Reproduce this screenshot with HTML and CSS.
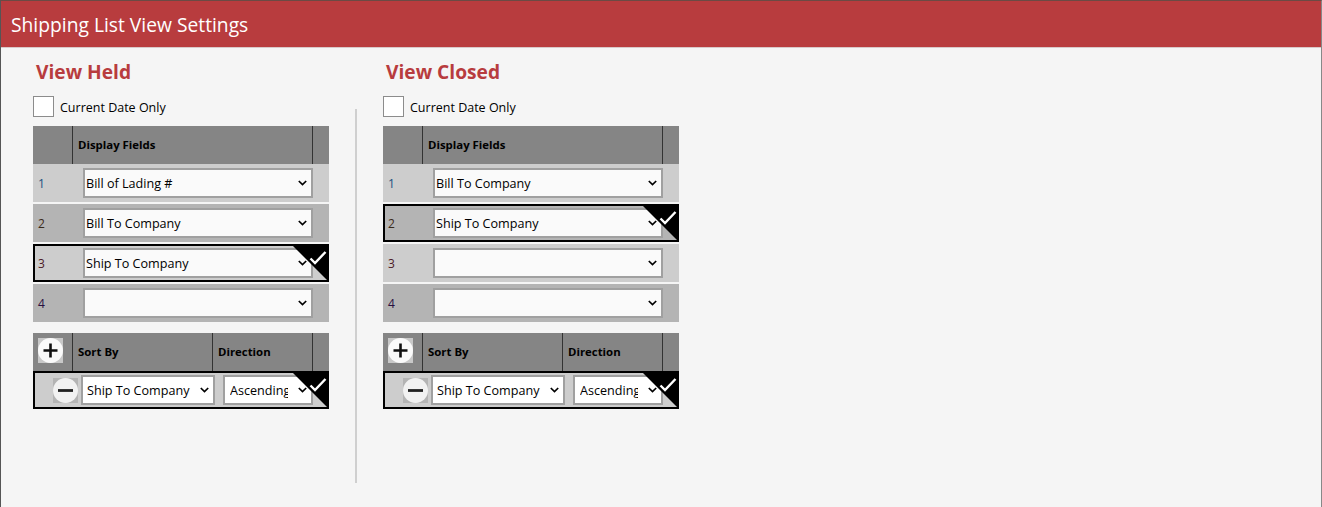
FILE: index.html
```html
<!DOCTYPE html>
<html lang="en">
<head>
<meta charset="utf-8">
<title>Shipping List View Settings</title>
<link rel="stylesheet" href="styles.css">
</head>
<body>
<div class="window">
  <header class="titlebar">Shipping List View Settings</header>
  <main class="content">
    <section class="panel">
      <h2 class="panel-title">View Held</h2>
      <label class="check-line"><input type="checkbox" class="check"><span class="check-text">Current Date Only</span></label>
      <div class="grid-head">
        <div class="hcell hcell-num"></div>
        <div class="hcell hcell-main">Display Fields</div>
        <div class="hcell hcell-end"></div>
      </div>
      <div class="field-rows">
        <div class="row odd"><span class="num n1">1</span><select class="sel"><option>Bill of Lading #</option></select></div>
        <div class="row even"><span class="num n2">2</span><select class="sel"><option>Bill To Company</option></select></div>
        <div class="row odd active"><span class="num n3">3</span><select class="sel"><option>Ship To Company</option></select>
          <svg class="corner" viewBox="0 0 36 36"><path d="M0 0H36V36Z" fill="#000"/><path d="M17.500 12.500L22 17L32.500 6" fill="none" stroke="#fff" stroke-width="2.400"/></svg></div>
        <div class="row even"><span class="num n4">4</span><select class="sel"><option></option></select></div>
      </div>
      <div class="grid-head sort-head">
        <div class="hcell hcell-num"><span class="round-wrap"><svg class="round" viewBox="0 0 25 25"><circle cx="12.500" cy="12.500" r="12.500" fill="#fafafa"/><path d="M5.500 12.500H19.500M12.500 5.500V19.500" stroke="#111" stroke-width="2.600"/></svg></span></div>
        <div class="hcell hcell-sort">Sort By</div>
        <div class="hcell hcell-dir">Direction</div>
        <div class="hcell hcell-end"></div>
      </div>
      <div class="row sort-row active">
        <span class="round-wrap minus"><svg class="round" viewBox="0 0 25 25"><circle cx="12.500" cy="12.500" r="12.500" fill="#f2f2f2"/><path d="M5 12.500H20" stroke="#222" stroke-width="2.800"/></svg></span>
        <select class="sel sel-sort"><option>Ship To Company</option></select>
        <select class="sel sel-dir"><option>Ascending</option></select>
        <svg class="corner" viewBox="0 0 36 36"><path d="M0 0H36V36Z" fill="#000"/><path d="M17.500 12.500L22 17L32.500 6" fill="none" stroke="#fff" stroke-width="2.400"/></svg>
      </div>
    </section>
    <div class="divider"></div>
    <section class="panel">
      <h2 class="panel-title">View Closed</h2>
      <label class="check-line"><input type="checkbox" class="check"><span class="check-text">Current Date Only</span></label>
      <div class="grid-head">
        <div class="hcell hcell-num"></div>
        <div class="hcell hcell-main">Display Fields</div>
        <div class="hcell hcell-end"></div>
      </div>
      <div class="field-rows">
        <div class="row odd"><span class="num n1">1</span><select class="sel"><option>Bill To Company</option></select></div>
        <div class="row even active"><span class="num n2">2</span><select class="sel"><option>Ship To Company</option></select>
          <svg class="corner" viewBox="0 0 36 36"><path d="M0 0H36V36Z" fill="#000"/><path d="M17.500 12.500L22 17L32.500 6" fill="none" stroke="#fff" stroke-width="2.400"/></svg></div>
        <div class="row odd"><span class="num n3">3</span><select class="sel"><option></option></select></div>
        <div class="row even"><span class="num n4">4</span><select class="sel"><option></option></select></div>
      </div>
      <div class="grid-head sort-head">
        <div class="hcell hcell-num"><span class="round-wrap"><svg class="round" viewBox="0 0 25 25"><circle cx="12.500" cy="12.500" r="12.500" fill="#fafafa"/><path d="M5.500 12.500H19.500M12.500 5.500V19.500" stroke="#111" stroke-width="2.600"/></svg></span></div>
        <div class="hcell hcell-sort">Sort By</div>
        <div class="hcell hcell-dir">Direction</div>
        <div class="hcell hcell-end"></div>
      </div>
      <div class="row sort-row active">
        <span class="round-wrap minus"><svg class="round" viewBox="0 0 25 25"><circle cx="12.500" cy="12.500" r="12.500" fill="#f2f2f2"/><path d="M5 12.500H20" stroke="#222" stroke-width="2.800"/></svg></span>
        <select class="sel sel-sort"><option>Ship To Company</option></select>
        <select class="sel sel-dir"><option>Ascending</option></select>
        <svg class="corner" viewBox="0 0 36 36"><path d="M0 0H36V36Z" fill="#000"/><path d="M17.500 12.500L22 17L32.500 6" fill="none" stroke="#fff" stroke-width="2.400"/></svg>
      </div>
    </section>
  </main>
</div>
</body>
</html>
```
FILE: styles.css
```css
* { box-sizing: border-box; }
html, body { margin: 0; height: 100%; }
body {
  font-family: "Open Sans", "Noto Sans", sans-serif;
  color: #000;
  background: #f5f5f5;
  overflow: hidden;
}
.window {
  height: 507px;
  display: flex;
  flex-direction: column;
  border-left: 1px solid #555;
  border-right: 1px solid #888;
  border-top: 1px solid #6b4a44;
}
.titlebar {
  height: 47px;
  flex: none;
  background: #b83c3e;
  border-bottom: 1px solid #d9c9c9;
  color: #fff;
  font-size: 19.25px;
  line-height: 47px;
  padding-left: 10px;
}
.content {
  display: flex;
  align-items: flex-start;
  padding-left: 32px;
}
.panel { width: 296px; flex: none; }
.panel-title {
  margin: 0;
  height: 48px;
  padding: 11px 0 0 3px;
  font-size: 19.2px;
  line-height: 26px;
  font-weight: 700;
  color: #b83c3e;
}
.divider {
  width: 2px;
  height: 374px;
  margin: 61px 26px 0;
  flex: none;
  background: #cfcfcf;
}
.check-line {
  display: flex;
  align-items: center;
  height: 21px;
  gap: 6px;
  font-size: 12.5px;
}
.check-text { padding-top: 2px; }
.check {
  appearance: none;
  margin: 0;
  width: 21px;
  height: 21px;
  background: #fff;
  border: 1px solid #8c8c8c;
}
.grid-head {
  display: flex;
  height: 38px;
  margin-top: 9px;
  background: #858585;
  font-size: 11.4px;
  font-weight: 700;
  line-height: 37px;
}
.hcell { padding-left: 5px; }
.hcell-num { width: 40px; flex: none; border-right: 1px solid #333; position: relative; padding: 0; }
.hcell-main { width: 240px; flex: none; border-right: 1px solid #333; }
.hcell-sort { width: 140px; flex: none; border-right: 1px solid #333; }
.hcell-dir { width: 100px; flex: none; border-right: 1px solid #333; }
.hcell-end { flex: 1; }
.field-rows {
  display: flex;
  flex-direction: column;
  gap: 2px;
}
.row {
  position: relative;
  display: flex;
  align-items: center;
  height: 38px;
}
.odd { background: #cdcdcd; }
.even { background: #b4b4b4; }
.active { box-shadow: inset 0 0 0 2px #000; }
.num {
  width: 50px;
  flex: none;
  padding-left: 5px;
  font-size: 12px;
}
.n1 { color: #20507f; }
.n2 { color: #3a2a1a; }
.n3 { color: #4a1a28; }
.n4 { color: #2a1040; }
.sel {
  appearance: none;
  width: 230px;
  height: 30px;
  margin: 0;
  border: 2px solid #a0a0a0;
  border-radius: 0;
  padding: 0 22px 0 1px;
  background: #fafafa url("data:image/svg+xml,%3Csvg xmlns='http://www.w3.org/2000/svg' width='9' height='6'%3E%3Cpath d='M.8 1L4.500 4.600L8.200 1' fill='none' stroke='%23000' stroke-width='1.700'/%3E%3C/svg%3E") no-repeat right 4px center;
  color: #000;
  font-family: inherit;
  font-size: 12.6px;
}
.sort-head { margin-top: 11px; }
.sort-row { background: #cdcdcd; }
.round-wrap {
  display: block;
  width: 25px;
  height: 25px;
  background: #c8c8c8;
}
.hcell-num .round-wrap { position: absolute; left: 5px; top: 5px; }
.round { display: block; width: 25px; height: 25px; }
.minus { margin-left: 20px; background: #b4b4b4; flex: none; }
.sel-sort {
  width: 134px;
  margin-left: 3px;
  padding-left: 4px;
  background-color: #fff;
}
.sel-dir {
  width: 90px;
  margin-left: 8px;
  padding: 0 23px 0 5px;
  background-color: #fff;
}
.corner {
  position: absolute;
  top: 2px;
  right: 0;
  width: 36px;
  height: 36px;
}
```
